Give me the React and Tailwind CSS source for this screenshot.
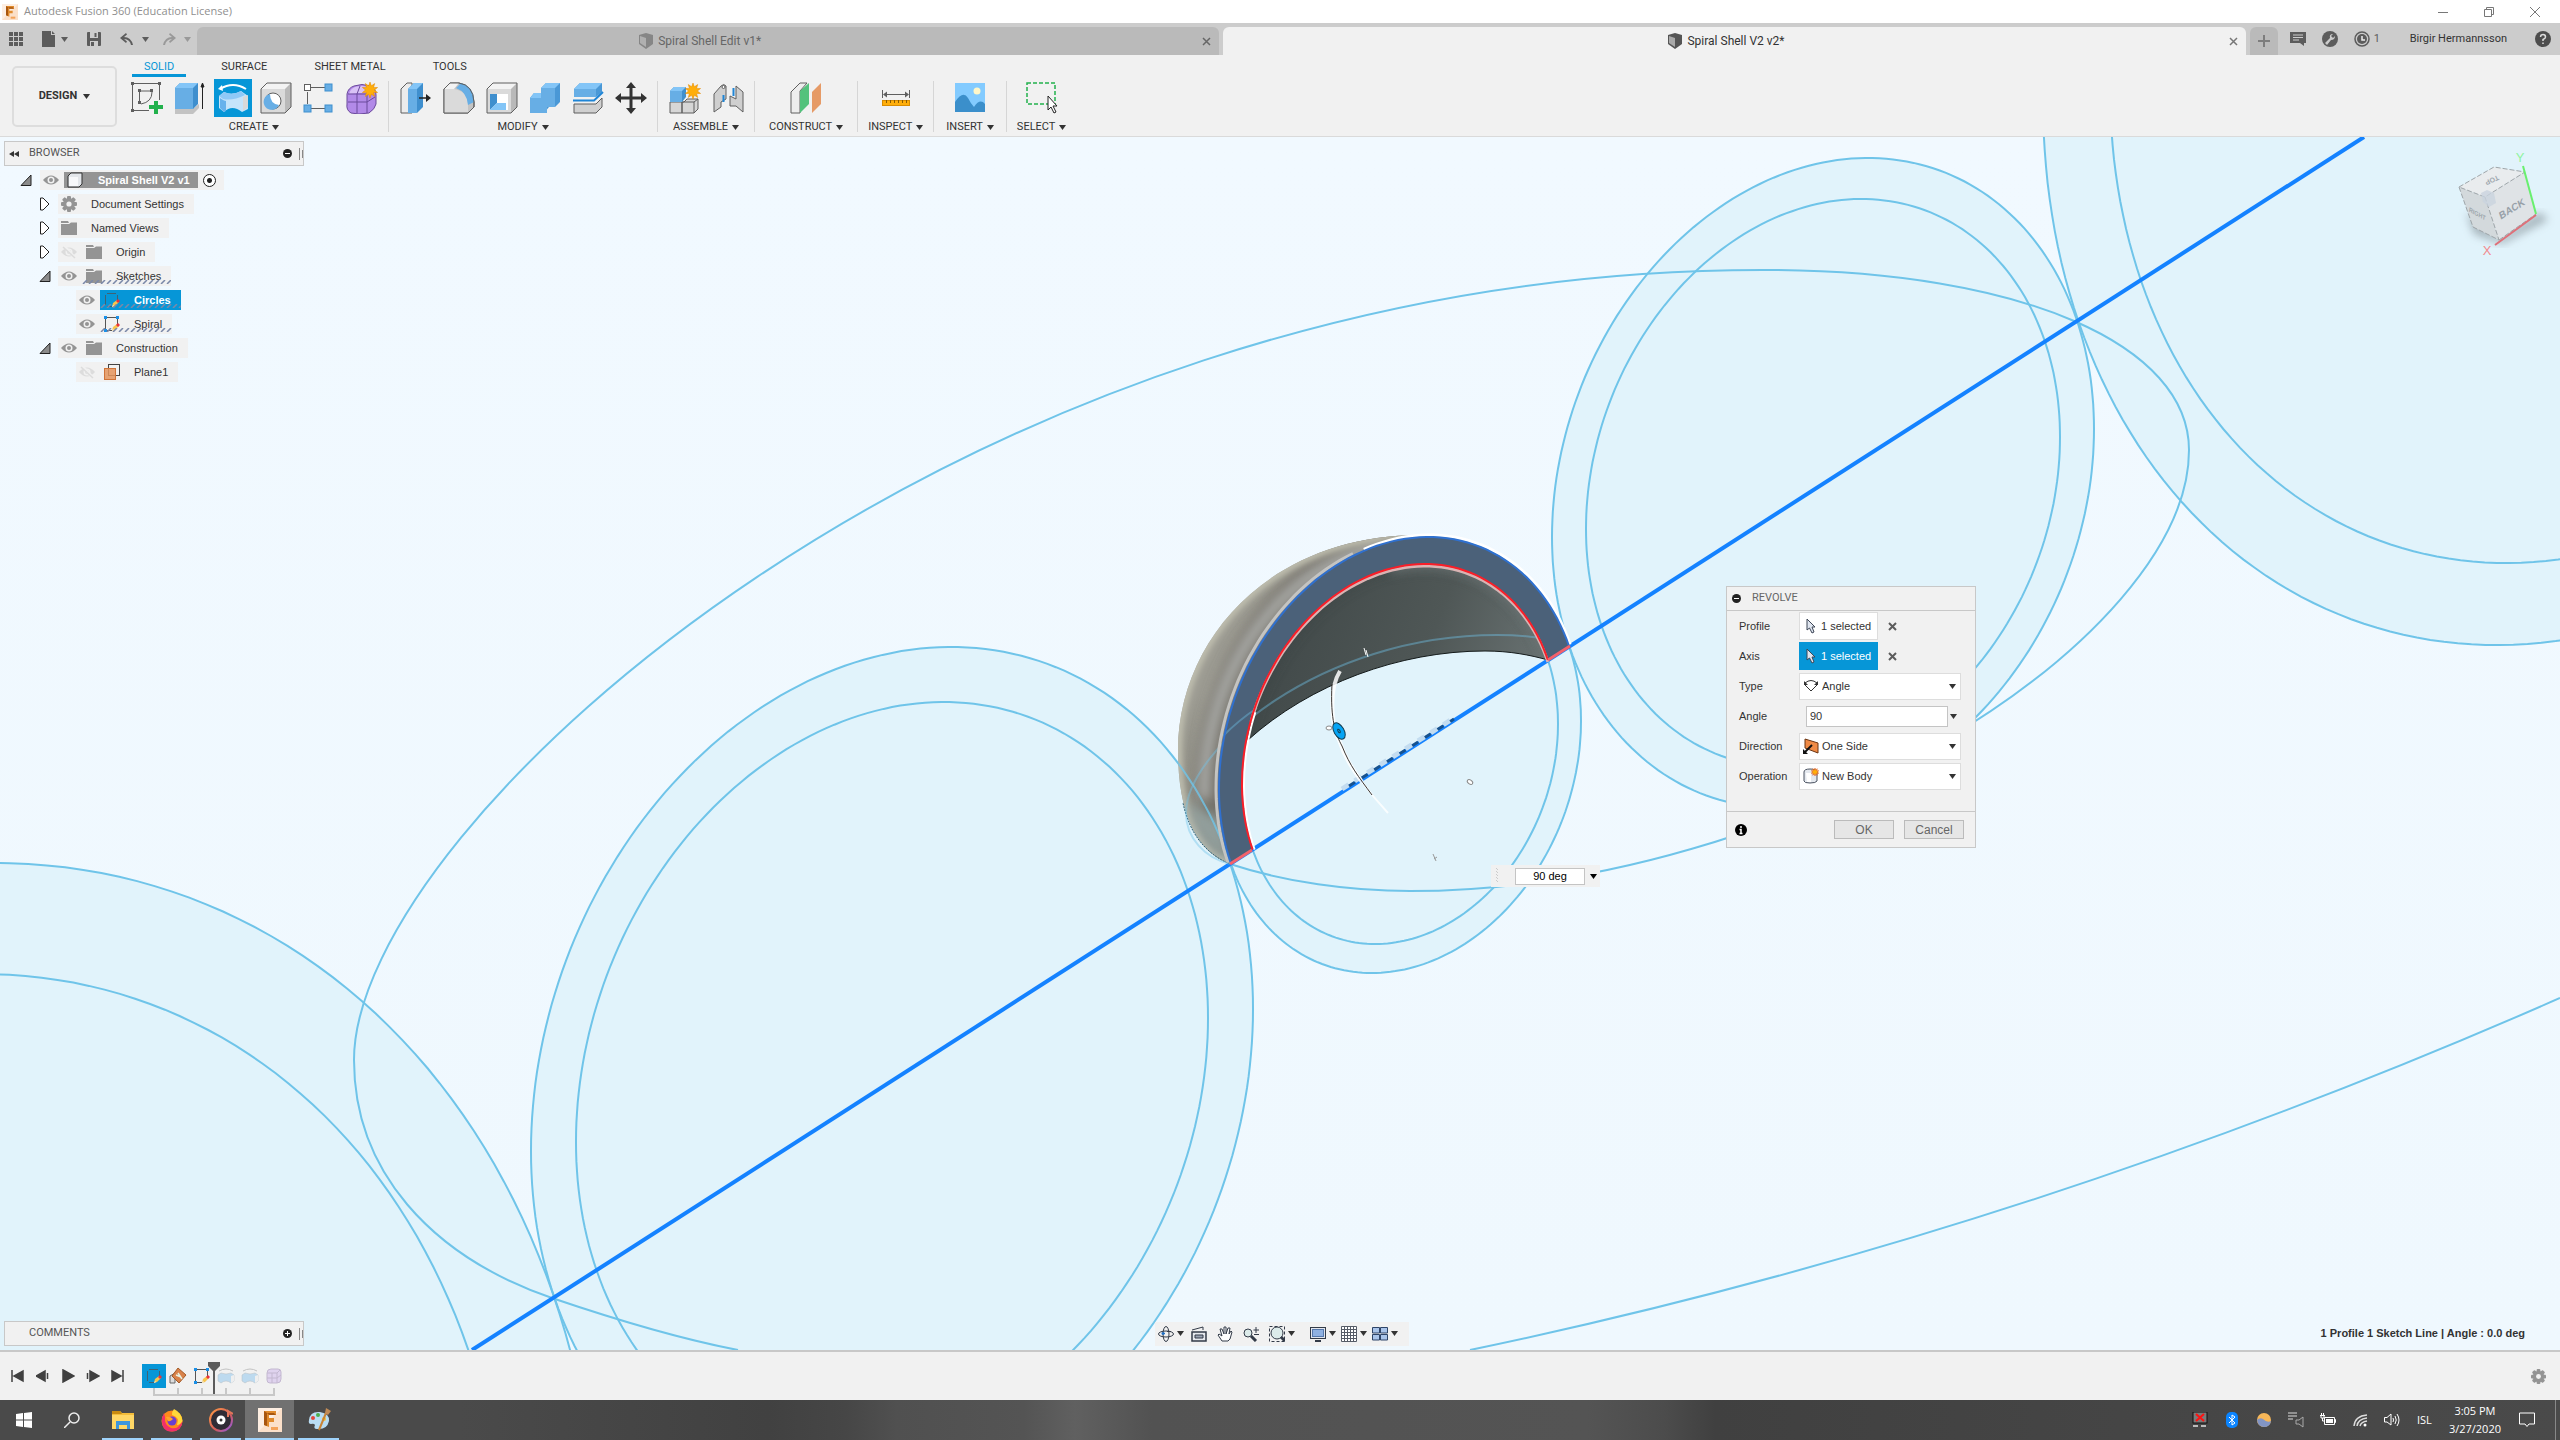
import React from "react";

/* ---------- geometry helpers ---------- */

// A circle seen in perspective: half width, half height and the vertical
// offset of its rightmost point.
const CIRCLES = {
  coreOuter: { cx: 1400, cy: 755, w: 181, h: 218, s: -34 },
  coreInner: { cx: 1400, cy: 754, w: 158, h: 190, s: -30 },
  lowOuter: { cx: 892, cy: 1080, w: 361, h: 433, s: -71 },
  lowInner: { cx: 892, cy: 1080, w: 316, h: 378, s: -62 },
  highOuter: { cx: 1823, cy: 483, w: 271, h: 325, s: -54 },
  highInner: { cx: 1823, cy: 483, w: 237, h: 284, s: -46 },
  farOuter: { cx: 2584, cy: -5, w: 541, h: 650, s: -105 },
  farInner: { cx: 2583, cy: -5, w: 473, h: 568, s: -92 },
  nearOuter: { cx: -122, cy: 1732, w: 723, h: 869, s: -140 },
  nearInner: { cx: -122, cy: 1732, w: 632, h: 758, s: -123 },
};

const depth = (c) => Math.sqrt(c.h * c.h - c.s * c.s);
const at = (c, t) => [c.cx + c.w * Math.cos(t), c.cy + c.s * Math.cos(t) + depth(c) * Math.sin(t)];
const angleOf = (c, [x, y]) => {
  const u = (x - c.cx) / c.w;
  return Math.atan2((y - c.cy - c.s * u) / depth(c), u);
};

function arcPoints(c, from, to) {
  let a = angleOf(c, from);
  let b = angleOf(c, to);
  if (b < a) b += Math.PI * 2;
  const pts = [];
  for (let i = 0; i <= 80; i++) pts.push(at(c, a + ((b - a) * i) / 80));
  return pts;
}

const fmt = (pts) => pts.map(([x, y]) => `${x.toFixed(1)} ${y.toFixed(1)}`).join(" L");

function ring(c) {
  const pts = [];
  for (let i = 0; i < 240; i++) pts.push(at(c, (i / 240) * Math.PI * 2));
  return `M${fmt(pts)}Z`;
}

const SPIRAL_START = "M1570 646C1550 638 1525 635 1497 635C1320 635 1186 750 1186 813C1186 838 1205 858 1230 864";
const SPIRAL_MID =
  "M1230 864C1285 882 1350 891 1410 891C1790 891 2189 640 2189 450C2189 346 2025 270 1762 270C960 270 354 825 354 1060C354 1170 430 1256 552 1298C605 1316 670 1337 738 1350";
const SPIRAL_END = "M1470 1350Q2021 1235 2560 998";
const SILHOUETTE = "M1230 864C1200 852 1178 820 1178 750C1178 640 1270 532 1427 535";
const MOUTH = "M1248 740C1310 684 1400 651 1485 651C1510 651 1530 655 1548 660";

const AXIS_A = [1230, 864];
const AXIS_B = [1570, 646];
const IN_A = [1252, 850];
const IN_B = [1548, 660];

function Scene() {
  const outerArc = arcPoints(CIRCLES.coreOuter, AXIS_A, AXIS_B);
  const innerArc = arcPoints(CIRCLES.coreInner, IN_A, IN_B);
  const innerTop = arcPoints(CIRCLES.coreInner, [1248, 740], IN_B);
  const band = `M${fmt(outerArc)} L${fmt([...innerArc].reverse())}Z`;
  const shell = `${SILHOUETTE} L${fmt(outerArc.slice(0, 44).reverse())}Z`;
  const cavity = `M${fmt([...innerTop].reverse())} ${MOUTH.replace("M", "L")}Z`;
  const shift = (dx, dy) => `M${fmt(outerArc.slice(0, 52).map(([x, y]) => [x + dx, y + dy]))}`;
  return (
    <svg className="absolute inset-0 h-full w-full" viewBox="0 137 2560 1213" preserveAspectRatio="xMidYMid slice" aria-hidden="true">
      <defs>
        <clipPath id="shellClip"><path d={shell} /></clipPath>
        <clipPath id="cavityClip"><path d={cavity} /></clipPath>
        <linearGradient id="bg" x1="0" y1="0" x2="0" y2="1">
          <stop offset="0" stopColor="#f1f9ff" /><stop offset="1" stopColor="#eff8fe" />
        </linearGradient>
        <linearGradient id="cavity" gradientUnits="userSpaceOnUse" x1="1290" y1="600" x2="1540" y2="690">
          <stop offset="0" stopColor="#424a4a" /><stop offset="0.55" stopColor="#4f5756" /><stop offset="1" stopColor="#6a7373" />
        </linearGradient>
        <linearGradient id="shell" gradientUnits="userSpaceOnUse" x1="1180" y1="700" x2="1240" y2="880">
          <stop offset="0" stopColor="#9c9b92" /><stop offset="0.6" stopColor="#8b8a81" /><stop offset="1" stopColor="#94a3a3" />
        </linearGradient>
        <filter id="soft" x="-30%" y="-30%" width="160%" height="160%"><feGaussianBlur stdDeviation="6" /></filter>
        <filter id="softer" x="-30%" y="-30%" width="160%" height="160%"><feGaussianBlur stdDeviation="3" /></filter>
      </defs>
      <rect x="0" y="137" width="2560" height="1213" fill="url(#bg)" />
      {["coreOuter", "lowOuter", "highOuter", "farOuter", "nearOuter"].map((k) => <path key={k} d={ring(CIRCLES[k])} fill="#e1f3fb" />)}
      <g fill="none" stroke="#6fc4e9" strokeWidth="2">
        {Object.keys(CIRCLES).map((k) => <path key={k} d={ring(CIRCLES[k])} />)}
        <path d={SPIRAL_MID} />
        <path d={SPIRAL_END} />
      </g>
      <path d="M472 1350L2364 137" stroke="#1482ff" strokeWidth="4" />

      {/* revolved body */}
      <path d={shell} fill="url(#shell)" />
      <g clipPath="url(#shellClip)" fill="none">
        <path d={shift(-10, -3)} stroke="#68645b" strokeWidth="24" filter="url(#soft)" opacity="0.75" />
        <path d="M1205 800C1200 700 1260 570 1385 545" stroke="#b4b6b4" strokeWidth="10" filter="url(#soft)" />
        <path d={SILHOUETTE} stroke="#c3c2b2" strokeWidth="8" filter="url(#softer)" />
        <path d="M1186 800Q1195 850 1232 864L1222 820Z" fill="#9aaaa9" filter="url(#soft)" opacity="0.8" />
      </g>
      <path d="M1230 864C1208 855 1190 836 1183 803" fill="none" stroke="#2b5f74" strokeWidth="1" strokeDasharray="2 1" />
      <path d={cavity} fill="url(#cavity)" />
      <g clipPath="url(#cavityClip)" fill="none">
        <path d={`M${fmt(innerTop)}`} stroke="#39413f" strokeWidth="6" filter="url(#soft)" opacity="0.6" />
        <path d={`M${fmt(innerTop.slice(40))}`} stroke="#7d8585" strokeWidth="10" filter="url(#soft)" opacity="0.7" />
      </g>
      <path d={MOUTH} fill="none" stroke="#141a1a" strokeWidth="1" />
      <g fill="none" stroke="#6fc4e9" strokeWidth="2">
        <path d={SPIRAL_START} opacity="0.42" />
        <g clipPath="url(#shellClip)"><path d={ring(CIRCLES.lowOuter)} opacity="0.8" /></g>
      </g>
      <path d={band} fill="#4b6179" />
      <path d="M1257 708C1245 716 1233 726 1223 736" fill="none" stroke="#6fc4e9" strokeWidth="2" opacity="0.4" />
      <path d={`M${fmt(outerArc.slice(0, 44).map(([x, y]) => [x - 3, y - 1]))}`} fill="none" stroke="#c4c4c2" strokeWidth="3" />
      <path d={`M${fmt(outerArc.slice(44).map(([x, y]) => [x + 1, y - 2]))}`} fill="none" stroke="#ffffff" strokeWidth="3" />
      <path d={`M${fmt(outerArc)}`} fill="none" stroke="#2f70cf" strokeWidth="2" />
      <path d={`M${fmt(innerArc.slice(18).map(([x, y]) => [x, y + 2]))}`} fill="none" stroke="#d9b3b3" strokeWidth="3" />
      <path d={`M${fmt(innerArc.slice(0, 20).map(([x, y]) => [x + 2, y]))}`} fill="none" stroke="#ffffff" strokeWidth="2" />
      <path d={`M${fmt(innerArc)}`} fill="none" stroke="#fa1e28" strokeWidth="2" />
      <path d="M1230 864L1252 850M1548 660L1570 646" stroke="#f4616b" strokeWidth="3" />

      {/* rotation handle */}
      <path d="M1342 789L1454 718" stroke="#c3dcf0" strokeWidth="5" strokeDasharray="8 7" />
      <path d="M1349 786L1454 719" stroke="#17528f" strokeWidth="3" strokeDasharray="7 8" />
      <path d="M1340 671C1328 690 1332 728 1339 740C1345 758 1352 768 1362 782" fill="none" stroke="#ffffff" strokeWidth="4" opacity="0.85" />
      <path d="M1362 782Q1374 798 1388 813" fill="none" stroke="#ffffff" strokeWidth="2" opacity="0.8" />
      <path d="M1332 684C1330 720 1336 735 1342 746C1350 766 1358 776 1372 795" fill="none" stroke="#3b3532" strokeWidth="1" />
      <ellipse cx="1339" cy="731" rx="5" ry="9" transform="rotate(-30 1339 731)" fill="#06a4f4" stroke="#123c50" strokeWidth="1" />
      <ellipse cx="1339" cy="731" rx="1" ry="2" transform="rotate(-30 1339 731)" fill="none" stroke="#123c50" />
      <ellipse cx="1329" cy="728" rx="3" ry="2" fill="#ffffff" stroke="#8a8a8a" strokeWidth="1" />
      <path d="M1364 648L1366 655M1366 650L1368 657" stroke="#ffffff" strokeWidth="1" />
      <ellipse cx="1470" cy="782" rx="3" ry="2" transform="rotate(35 1470 782)" fill="#ffffff" stroke="#8a8a8a" strokeWidth="1" />
      <path d="M1433 854L1436 861M1434 859L1437 857" stroke="#9a9a9a" strokeWidth="1" />
    </svg>
  );
}

function ViewCube() {
  return (
    <svg className="absolute top-2 right-0 h-[116px] w-[120px]" viewBox="2440 145 120 116" role="img" aria-label="View cube, back">
      <defs>
        <filter id="cubeShadow"><feGaussianBlur stdDeviation="4" /></filter>
      </defs>
      <path d="M2466 212L2500 238L2540 212L2548 220L2502 244L2474 234Z" fill="#8d9aa0" filter="url(#cubeShadow)" opacity="0.7" />
      <path d="M2459 187L2494 167L2525 172L2485 197Z" fill="#e9ecee" />
      <path d="M2459 187L2485 197L2499 240L2473 227Z" fill="#d3d9dc" />
      <path d="M2485 197L2525 172L2536 214L2499 240Z" fill="#dfe3e6" />
      <path d="M2459 187L2494 167L2525 172L2485 197ZM2459 187L2473 227L2499 240L2485 197M2499 240L2536 214" fill="none" stroke="#9ea5a9" strokeDasharray="5 2" />
      <path d="M2481 193L2487 190L2494 193L2496 203L2489 207L2483 202Z" fill="#c9d3de" opacity="0.8" />
      <g fontFamily="Liberation Sans, sans-serif" fontWeight="700" textAnchor="middle">
        <text transform="translate(2513 212) rotate(-32) skewX(-12)" fontSize="10" fill="#97a0a8">BACK</text>
        <text transform="translate(2477 216) rotate(28) skewX(20)" fontSize="6" fill="#a0a8ae">RIGHT</text>
        <text transform="translate(2491 178) rotate(155)" fontSize="7" fill="#a0a8ae">TOP</text>
      </g>
      <path d="M2523 166L2536 214" stroke="#69ef6f" strokeWidth="2" />
      <path d="M2536 215L2495 245" stroke="#df7079" strokeWidth="2" />
      <g fontFamily="Liberation Sans, sans-serif" fontSize="13" textAnchor="middle">
        <text x="2520" y="162" fill="#8ff3a0">Y</text>
        <text x="2487" y="255" fill="#f28a90">X</text>
      </g>
    </svg>
  );
}

/* ---------- small shared drawings ---------- */

const Caret = ({ className = "" }) => (
  <svg className={`h-[5px] w-[7px] shrink-0 ${className}`} viewBox="0 0 7 5" aria-hidden="true"><path d="M0 0H7L3.5 5Z" fill="currentColor" /></svg>
);

const Cube = ({ light, dark }) => (
  <svg className="h-4 w-4" viewBox="0 0 16 16" aria-hidden="true">
    <path d="M8 0L15 2V11L8 16L1 11V2Z" fill={dark} /><path d="M2 3L8 5V14L2 10Z" fill={light} />
  </svg>
);

const Gear = ({ size }) => (
  <svg width={size} height={size} viewBox="0 0 16 16" aria-hidden="true">
    <g fill="#949494">
      {[0, 45, 90, 135].map((a) => <rect key={a} x="6" y="0" width="4" height="16" rx="1" transform={`rotate(${a} 8 8)`} />)}
      <circle cx="8" cy="8" r="6" />
    </g>
    <circle cx="8" cy="8" r="2.6" fill="#f1f1f1" />
  </svg>
);

/* ---------- ribbon icons (32 × 32) ---------- */

const EDGE = "#5f5f5f";
const star = (cx, cy, r) =>
  Array.from({ length: 20 }, (_, i) => {
    const a = (i / 20) * Math.PI * 2 - Math.PI / 2;
    const q = i % 2 ? r * 0.55 : r;
    return `${cx + q * Math.cos(a)},${cy + q * Math.sin(a)}`;
  }).join(" ");

const ICONS = {
  sketch: (
    <g>
      <path d="M2 1.5H29M1.5 2V29M28.5 2V18M2 28.5H18" stroke={EDGE} fill="none" />
      <path d="M9 9H20M8.5 9V21M21 10Q21 20 10 22" stroke={EDGE} fill="none" />
      {[[0, 0], [27, 0], [0, 27], [7, 7], [19, 7], [7, 19]].map(([x, y]) => <rect key={`${x}-${y}`} x={x} y={y} width="3" height="3" fill={EDGE} />)}
      <path d="M23 19H27V23H32V27H27V32H23V27H18V23H23Z" fill="#22b14c" />
    </g>
  ),
  extrude: (
    <g>
      <path d="M1 26L20 26L25 22V26L19 32H1Z" fill="#c3c3c3" />
      <path d="M1 6L6 1H24V22L19 27H1Z" fill="#3f8fce" />
      <path d="M1 6L6 1H24L19 6Z" fill="#83c5f7" /><path d="M1 6H19V27H1Z" fill="#67aee5" />
      <path d="M28.500 27V4M27 5L28.500 1L30 5Z" stroke="#222" fill="#222" />
    </g>
  ),
  revolve: (
    <g>
      <path d="M3 7Q16 -1 29 7" fill="none" stroke="#fff" strokeWidth="2" /><path d="M1 7L5 3L6 9Z" fill="#fff" />
      <path d="M2 14L7 10Q15 14 24 9L31 14V27L25 30Q15 22 7 30L2 26Z" fill="#c5e4fb" />
      <path d="M2 14L7 10Q15 14 24 9L28 13Q16 19 6 17Z" fill="#8fc9f7" />
      <path d="M3 16Q7 19 9 19V29L7 30L3 26Z" fill="#68b2ec" /><path d="M26 15L31 13V25L26 29Z" fill="#d9d9d9" />
    </g>
  ),
  hole: (
    <g>
      <path d="M1 7L7 1H31V25L25 31H1Z" fill="#b9b9b9" /><path d="M1 7H25V31H1Z" fill="#dadada" /><path d="M1 7L7 1H31L25 7Z" fill="#f3f3f3" />
      <path d="M1 7L7 1H31V25L25 31H1Z" stroke={EDGE} fill="none" />
      <circle cx="13" cy="19" r="8" fill="#fff" stroke={EDGE} />
      <path d="M10 12A8 8 0 1 0 19 23Q10 22 10 12Z" fill="#67aee5" />
    </g>
  ),
  pattern: (
    <g>
      <path d="M8 5.500H22M4.500 10V22M8 26.500H22" stroke={EDGE} />
      <rect x="1.500" y="2.500" width="6" height="6" fill="#fff" stroke={EDGE} />
      <rect x="22" y="2" width="7" height="7" fill="#67aee5" stroke="#3f8fce" /><rect x="1" y="23" width="7" height="7" fill="#67aee5" stroke="#3f8fce" /><rect x="22" y="23" width="7" height="7" fill="#67aee5" stroke="#3f8fce" />
    </g>
  ),
  form: (
    <g>
      <path d="M1 12Q2 6 8 4Q16 1 24 4Q30 6 30 13V22Q29 27 23 31Q12 33 5 31Q0 28 1 22Z" fill="#b28ae8" stroke="#6b4a9b" />
      <path d="M3 12Q4 7 9 5Q16 3 22 5L20 11Q10 11 3 12Z" fill="#d9c2f6" />
      <path d="M2 20H21L29 15M11 31V12L14 4M21 31V12L25 6M2 12H21L29 8" stroke="#6b4a9b" fill="none" />
      <polygon points={star(24, 8, 8)} fill="#ffae0a" stroke="#e08600" strokeWidth="0.500" />
    </g>
  ),
  pressPull: (
    <g>
      <path d="M1 7L7 1H12V31H1Z" fill="#ececec" stroke={EDGE} /><path d="M8 7L14 1H23V25L17 31H8Z" fill="#3f8fce" />
      <path d="M8 7L14 1H23L17 7Z" fill="#83c5f7" /><path d="M8 7H17V31H8Z" fill="#67aee5" /><path d="M19 16H28" stroke="#222" strokeWidth="1.500" /><path d="M26 12L31 16L26 20Z" fill="#222" />
    </g>
  ),
  fillet: (
    <g>
      <path d="M1 7L7 1H16Q30 3 31 20V25L25 31H1Z" fill="#c4c4c4" stroke={EDGE} /><path d="M1 7H11Q24 9 25 21V31H1Z" fill="#dadada" /><path d="M1 7L7 1H16L11 7Z" fill="#f3f3f3" />
      <path d="M13 6L18 1Q31 5 31 20L25 23Q24 10 13 6Z" fill="#67aee5" /><path d="M1 7L7 1H16Q30 3 31 20V25L25 31H1Z" fill="none" stroke={EDGE} />
    </g>
  ),
  shell: (
    <g>
      <path d="M1 7L7 1H31V25L25 31H1Z" fill="#b9b9b9" /><path d="M1 7H25V31H1Z" fill="#dadada" /><path d="M1 7L7 1H31L25 7Z" fill="#f3f3f3" />
      <path d="M1 7L7 1H31V25L25 31H1Z" stroke={EDGE} fill="none" />
      <rect x="4" y="12" width="18" height="16" fill="#fff" /><path d="M4 12H11V21L4 28Z" fill="#3f8fce" /><path d="M4 28L11 21H20V28Z" fill="#83c5f7" />
    </g>
  ),
  combine: (
    <g>
      <path d="M12 6L17 1H31V20L26 25H20L15 31H1V16L5 11H12Z" fill="#4a98d6" /><path d="M12 6H26V25H18V31H1V16H12Z" fill="#67aee5" />
      <path d="M12 6L17 1H31L26 6ZM1 16L5 11H12V16Z" fill="#83c5f7" />
    </g>
  ),
  split: (
    <g>
      <path d="M2 7L8 1H30V10L24 15H2Z" fill="#4a98d6" /><path d="M2 7H24V15H2Z" fill="#67aee5" /><path d="M2 7L8 1H30L24 7Z" fill="#83c5f7" />
      <path d="M1 18.500H22L31 10" stroke="#1f85d6" strokeWidth="2" fill="none" />
      <path d="M2 22H24L30 16V25L24 31H2Z" fill="#d0d0d0" stroke={EDGE} />
    </g>
  ),
  move: <path d="M16 0L21 6H17.500V14.500H26V11L32 16L26 21V17.500H17.500V26H21L16 32L11 26H14.500V17.500H6V21L0 16L6 11V14.500H14.500V6H11Z" fill="#333" />,
  component: (
    <g>
      <path d="M1 20H13V31H1ZM15 20L18 17H29V27L25 31H13V20Z" fill="#d6d6d6" stroke={EDGE} /><path d="M13 20H25V31M25 20L29 17" stroke={EDGE} fill="none" />
      <path d="M1 9L5 5H17V15L13 20H1Z" fill="#3f8fce" /><path d="M1 9H13V20H1Z" fill="#67aee5" /><path d="M1 9L5 5H17L13 9Z" fill="#83c5f7" />
      <polygon points={star(24, 9, 8)} fill="#ffae0a" stroke="#e08600" strokeWidth="0.500" />
    </g>
  ),
  joint: (
    <g>
      <path d="M2 12L9 4Q12 1 14 4V17L9 20V25L2 30Z" fill="#cfcfcf" stroke={EDGE} /><circle cx="11.500" cy="5" r="1.500" fill="#fff" stroke={EDGE} />
      <path d="M24 4L31 10V30L24 24H18V14L24 17Z" fill="#cfcfcf" stroke={EDGE} /><path d="M11.500 13V20M21.500 6V14" stroke="#1f85d6" strokeWidth="2" />
    </g>
  ),
  construct: (
    <g>
      <path d="M1 10L10 1H17L10 9V31H1Z" fill="#ededed" stroke={EDGE} /><path d="M10 9L19 1V22L10 31Z" fill="#53c27c" /><path d="M22 10L31 1V22L22 31Z" fill="#e69a66" />
    </g>
  ),
  inspect: (
    <g>
      <path d="M2.500 8V16M29.500 8V16M4 12.500H28" stroke={EDGE} /><path d="M3 12.500L7 9.500V15.500ZM29 12.500L25 9.500V15.500Z" fill={EDGE} />
      <rect x="2.500" y="18.500" width="27" height="5" fill="#ffae0a" stroke="#d98c00" /><path d="M6.500 18V21M10.500 18V21M14.500 18V21M18.500 18V21M22.500 18V21M26.500 18V21" stroke="#8a5a00" />
    </g>
  ),
  insert: (
    <g>
      <rect x="1" y="1" width="30" height="29" fill="#83cbff" /><circle cx="23" cy="9" r="3.500" fill="#fff7c9" />
      <path d="M1 20Q9 8 14 16Q17 22 20 25Q26 16 31 22V30H1Z" fill="#3b8fcb" />
    </g>
  ),
  select: (
    <g>
      <rect x="1" y="1" width="28" height="21" fill="none" stroke="#22b14c" strokeWidth="1.500" strokeDasharray="4 2" />
      <path d="M22 14V28L25 25L28 31L30 30L27 24H31Z" fill="#fff" stroke="#222" />
    </g>
  ),
};

function ToolButton({ name, active }) {
  return (
    <button type="button" aria-label={name} aria-pressed={!!active} className="flex h-[38px] w-[43px] items-center justify-center">
      <span className={active ? "flex h-[38px] w-[38px] items-center justify-center bg-[#0696d7]" : "flex"}>
        <svg className="h-8 w-8" viewBox="0 0 32 32" aria-hidden="true">{ICONS[name]}</svg>
      </span>
    </button>
  );
}

const GROUPS = [
  { label: "CREATE", tools: ["sketch", "extrude", "revolve", "hole", "pattern", "form"], cls: "px-[5px]" },
  { label: "MODIFY", tools: ["pressPull", "fillet", "shell", "combine", "split", "move"], cls: "px-[5px]" },
  { label: "ASSEMBLE", tools: ["component", "joint"], cls: "px-[5px]" },
  { label: "CONSTRUCT", tools: ["construct"], cls: "px-3.5" },
  { label: "INSPECT", tools: ["inspect"], cls: "px-2.5" },
  { label: "INSERT", tools: ["insert"], cls: "px-3" },
  { label: "SELECT", tools: ["select"], cls: "px-2.5" },
];

function TitleBar() {
  return (
    <header className="flex h-[23px] items-center justify-between bg-white pr-0.5 pl-0.5">
      <div className="flex items-center gap-1.5">
        <FusionLogo className="h-4 w-4" />
        <h1 className="font-['Open_Sans',sans-serif] text-[11px] text-[#8f8f8f]">Autodesk Fusion 360 (Education License)</h1>
      </div>
      <div className="flex text-[#777]">
        <button type="button" aria-label="Minimize" className="flex h-[23px] w-[46px] items-center justify-center"><svg className="h-2.5 w-2.5" viewBox="0 0 10 10"><path d="M0 5.500H10" stroke="currentColor" /></svg></button>
        <button type="button" aria-label="Restore" className="flex h-[23px] w-[46px] items-center justify-center"><svg className="h-2.5 w-2.5" viewBox="0 0 10 10"><path d="M.5 2.500H7.500V9.500H.5ZM2.500 2.500V.5H9.500V7.500H7.500" fill="none" stroke="currentColor" /></svg></button>
        <button type="button" aria-label="Close" className="flex h-[23px] w-[46px] items-center justify-center"><svg className="h-2.5 w-2.5" viewBox="0 0 10 10"><path d="M0 0L10 10M10 0L0 10" stroke="currentColor" /></svg></button>
      </div>
    </header>
  );
}

function FusionLogo({ className }) {
  return (
    <svg className={className} viewBox="0 0 24 24" aria-hidden="true">
      <rect width="24" height="24" fill="#fbe0ca" /><path d="M0 0H24L0 24Z" fill="#fdeee2" />
      <path d="M6 3H18V7H11V10H16V14H11V19L6 17Z" fill="#e08a2c" /><path d="M6 3L9 5V18L6 17ZM11 7H18L16 5H9Z" fill="#a8560f" /><rect x="13" y="19" width="7" height="3" fill="#f4a259" />
    </svg>
  );
}

function DocumentTabs() {
  return (
    <nav aria-label="Documents" className="flex h-8 bg-[#ccc] pr-[9px] font-[Roboto,sans-serif] text-[#5c5c5c]">
      <div className="flex w-[197px] items-center pl-[9px]">
        <button type="button" aria-label="Data panel" className="w-[33px]">
          <svg className="h-3.5 w-3.5" viewBox="0 0 14 14"><path d="M0 0H4V4H0ZM5 0H9V4H5ZM10 0H14V4H10ZM0 5H4V9H0ZM5 5H9V9H5ZM10 5H14V9H10ZM0 10H4V14H0ZM5 10H9V14H5ZM10 10H14V14H10Z" fill="#5c5c5c" /></svg>
        </button>
        <button type="button" aria-label="File" className="flex w-[45px] items-center gap-1.5">
          <svg className="h-4 w-[13px]" viewBox="0 0 13 16"><path d="M0 0H9V4H13V16H0ZM10 0L13 3H10Z" fill="#5c5c5c" /></svg><Caret />
        </button>
        <button type="button" aria-label="Save" className="w-[33px]">
          <svg className="h-3.5 w-3.5" viewBox="0 0 14 14"><path d="M0 1Q0 0 1 0H13Q14 0 14 1V13Q14 14 13 14H1Q0 14 0 13Z" fill="#5c5c5c" /><path d="M3 0H11V6H3ZM3 9H11V14H3Z" fill="#ccc" /><path d="M7.500 1H9.500V5H7.500ZM4 10H7V14H4Z" fill="#5c5c5c" /></svg>
        </button>
        <button type="button" aria-label="Undo" className="flex w-[42px] items-center gap-2">
          <svg className="h-3 w-3.5" viewBox="0 0 14 12"><path d="M6 0L7 1.500L4 4Q11 4 13 12H11Q10 6.500 4 6L7 8.500L6 10L0 5Z" fill="#5c5c5c" /></svg><Caret />
        </button>
        <button type="button" aria-label="Redo" className="flex items-center gap-2 text-[#999]">
          <svg className="h-3 w-3.5" viewBox="0 0 14 12"><path d="M8 0L7 1.500L10 4Q3 4 1 12H3Q4 6.500 10 6L7 8.500L8 10L14 5Z" fill="#999" /></svg><Caret />
        </button>
      </div>
      <div className="mt-1 mr-1 flex flex-1 items-center rounded-t-md bg-[#bababa] text-[#666]">
        <span className="flex flex-1 items-center justify-center gap-1 text-xs"><Cube light="#b0b0b0" dark="#868686" />Spiral Shell Edit v1*</span>
        <button type="button" aria-label="Close Spiral Shell Edit v1" className="mr-2"><CloseX /></button>
      </div>
      <div className="mt-1 mr-1 flex flex-1 items-center rounded-t-md bg-[#f1f1f1] text-[#333]">
        <span className="flex flex-1 items-center justify-center gap-1 text-xs"><Cube light="#a9a9a9" dark="#555" />Spiral Shell V2 v2*</span>
        <button type="button" aria-label="Close Spiral Shell V2 v2" className="mr-2 text-[#777]"><CloseX /></button>
      </div>
      <button type="button" aria-label="New document" className="mt-1 mr-3 flex w-7 items-center justify-center rounded-t-md bg-[#bababa]">
        <svg className="h-3 w-3" viewBox="0 0 12 12"><path d="M6 0V12M0 6H12" stroke="#7d7d7d" strokeWidth="2" /></svg>
      </button>
      <div className="flex items-center text-[11px]">
        <button type="button" aria-label="Notifications" className="w-8"><svg className="h-3.5 w-4" viewBox="0 0 16 14"><path d="M0 0H16V11H14V14L10 11H0Z" fill="#5c5c5c" /><path d="M3 3H13M3 5.500H13M3 8H9" stroke="#ccc" /></svg></button>
        <button type="button" aria-label="Extensions" className="w-8"><svg className="h-4 w-4" viewBox="0 0 16 16"><circle cx="8" cy="8" r="8" fill="#5c5c5c" /><path d="M3 12L8 7Q7 3 11 3L9 5L11 7L13 5Q13 9 9 9L5 14Z" fill="#ccc" /></svg></button>
        <button type="button" aria-label="Job status" className="flex w-12 items-center gap-1"><svg className="h-4 w-4" viewBox="0 0 16 16"><circle cx="8" cy="8" r="7" fill="none" stroke="#5c5c5c" strokeWidth="1.500" /><circle cx="8" cy="8" r="5" fill="#5c5c5c" /><path d="M8 5V9H11" fill="none" stroke="#eee" strokeWidth="1.500" /></svg>1</button>
        <button type="button" className="ml-2 text-[#333]">Birgir Hermannsson</button>
        <button type="button" aria-label="Help" className="ml-7"><svg className="h-4 w-4" viewBox="0 0 16 16"><circle cx="8" cy="8" r="8" fill="#4d4d4d" /><path d="M5.500 6Q5.500 3.500 8 3.500T10.500 6Q10.500 7.500 8 8.500V10M8 11.500V13" fill="none" stroke="#ddd" strokeWidth="1.500" /></svg></button>
      </div>
    </nav>
  );
}

const CloseX = () => <svg className="h-[9px] w-[9px]" viewBox="0 0 9 9"><path d="M1 1L8 8M8 1L1 8" stroke="currentColor" strokeWidth="1.500" /></svg>;

function Ribbon() {
  return (
    <div className="flex border-b border-[#dadada] bg-[#f1f1f1] font-[Roboto,sans-serif] text-[11px] text-[#333]">
      <div className="w-[120px] pt-[11px] pl-3">
        <button type="button" className="flex h-[61px] w-[105px] items-center justify-center gap-1.5 rounded-[5px] border-2 border-[#ddd] font-bold">DESIGN <Caret /></button>
      </div>
      <div>
        <div role="tablist" className="flex h-[22px] gap-[23px] pl-3">
          {["SOLID", "SURFACE", "SHEET METAL", "TOOLS"].map((t, i) => (
            <button key={t} type="button" role="tab" aria-selected={i === 0} className={i === 0 ? "border-b-[3px] border-[#0696d7] px-3 pt-1 text-[#0696d7]" : "border-b-[3px] border-transparent px-3 pt-1"}>{t}</button>
          ))}
        </div>
        <div className="flex pt-0.5">
          {GROUPS.map((g, i) => (
            <section key={g.label} className="flex">
              <div className={`flex flex-col items-center ${g.cls}`}>
                <div className="flex">{g.tools.map((t) => <ToolButton key={t} name={t} active={t === "revolve"} />)}</div>
                <button type="button" className="flex h-[19px] items-center gap-1 pt-0.5">{g.label}<Caret /></button>
              </div>
              {i < GROUPS.length - 1 && <span className="mt-0.5 mb-1 w-px bg-[#d6d6d6]" />}
            </section>
          ))}
        </div>
      </div>
    </div>
  );
}

/* ---------- browser tree ---------- */

const Eye = ({ off }) => (
  <svg className="h-4 w-4 shrink-0" viewBox="0 0 16 16" aria-hidden="true">
    <path d="M0 8Q8 -1 16 8Q8 17 0 8Z" fill={off ? "#dcdcdc" : "#949494"} /><circle cx="8" cy="8" r="3.500" fill="#f1f1f1" /><circle cx="8" cy="8" r="2" fill={off ? "#dcdcdc" : "#949494"} />
    {off && <path d="M2 1L15 15" stroke="#f1f1f1" strokeWidth="3" />}
    {off && <path d="M2 3L14 14" stroke="#dcdcdc" strokeWidth="1.500" />}
  </svg>
);
const Folder = () => <svg className="h-4 w-4 shrink-0" viewBox="0 0 16 16" aria-hidden="true"><path d="M0 1H7L8 3H0ZM0 4H8L10 2.500H16V15H0Z" fill="#949494" /></svg>;
const SketchIcon = ({ selected }) => (
  <svg className="h-4 w-4 shrink-0" viewBox="0 0 16 16" aria-hidden="true">
    <path d="M3 1.500H12M1.500 3V13M13.500 3V8M3 14.500H8" stroke={selected ? "#3f6274" : "#555"} fill="none" />
    {!selected && <path d="M0 0H3V3H0ZM12 0H15V3H12ZM0 13H3V16H0Z" fill="#1a90e8" />}
    <path d="M8 15L9 11L13 8L15 10L11 14Z" fill="#f9c44c" /><path d="M12 9L14 7L16 9L14 11Z" fill="#e8323c" /><path d="M8 15L9 13L10 14Z" fill="#eee" />
  </svg>
);
const PlaneIcon = () => <svg className="h-4 w-4 shrink-0" viewBox="0 0 16 16" aria-hidden="true"><rect x="4.500" y=".5" width="11" height="11" fill="#f1f1f1" stroke="#444" /><rect x=".5" y="4.500" width="11" height="11" fill="#e4945c" fillOpacity=".85" stroke="#cf7338" /></svg>;
const BodyIcon = () => <svg className="h-4 w-4 shrink-0" viewBox="0 0 16 16" aria-hidden="true"><path d="M1 4L4 1H15V12L12 15H1Z" fill="#e3e6ea" stroke="#333" /><path d="M2 5H11V14H2Z" fill="#f7f8fa" /></svg>;

const Arrow = ({ open }) => (
  <svg className="h-3.5 w-3 shrink-0" viewBox="0 0 12 14" aria-hidden="true">
    {open ? <path d="M11 2V12.500H1Z" fill="#8b8b8b" stroke="#222" /> : <path d="M1.500 1H4L10 7L4 13H1.500Z" fill="#fff" stroke="#222" />}
  </svg>
);

const Hatch = () => (
  <svg className="absolute bottom-0.5 left-0 h-1 w-full" aria-hidden="true">
    <defs><pattern id="hatch" width="6" height="4" patternUnits="userSpaceOnUse"><path d="M1 4L5 0" stroke="#7a88a8" strokeWidth="1.500" /></pattern></defs>
    <rect width="100%" height="4" fill="url(#hatch)" />
  </svg>
);

const TREE = [
  { arrow: "closed", icon: <Gear size={16} />, text: "Document Settings" },
  { arrow: "closed", icon: <Folder />, text: "Named Views" },
  { arrow: "closed", eye: "off", icon: <Folder />, text: "Origin" },
  { arrow: "open", eye: "on", icon: <Folder />, text: "Sketches", hatch: true },
  { eye: "on", icon: <SketchIcon selected />, text: "Circles", hatch: true, selected: true },
  { eye: "on", icon: <SketchIcon />, text: "Spiral", hatch: true },
  { arrow: "open", eye: "on", icon: <Folder />, text: "Construction" },
  { eye: "off", icon: <PlaneIcon />, text: "Plane1" },
];

function PanelHeader({ title, collapsed }) {
  return (
    <div className="flex h-[25px] w-[300px] items-center border border-[#c8c8c8] bg-[#f1f1f1] pl-1 text-[11px] text-[#555]">
      <button type="button" aria-label={`Collapse ${title}`} className="w-5">
        {!collapsed && <svg className="h-1.5 w-2.5" viewBox="0 0 10 6"><path d="M5 0V6L0 3ZM10 0V6L5 3Z" fill="#333" /></svg>}
      </button>
      <h2 className="flex-1 font-[Roboto,sans-serif]">{title}</h2>
      <button type="button" aria-label={`${title} options`} className="mr-[7px]"><RoundSign plus={collapsed} /></button>
      <svg className="h-3 w-1" viewBox="0 0 4 12"><path d="M.5 0V12M3.500 2V10" stroke="#888" /></svg>
    </div>
  );
}
const RoundSign = ({ plus }) => <svg className="h-[9px] w-[9px]" viewBox="0 0 9 9"><circle cx="4.500" cy="4.500" r="4.500" fill="#222" /><path d={plus ? "M2 4.500H7M4.500 2V7" : "M2 4.500H7"} stroke="#fff" /></svg>;

function BrowserPanel() {
  return (
    <aside aria-label="Browser" className="text-[11px] text-[#333]">
      <PanelHeader title="BROWSER" />
      <ul className="pt-0.5">
        <li className="flex h-6 items-center gap-2 pl-4">
          <Arrow open />
          <div className="flex h-5 items-center gap-[5px] bg-[#f1f1f1] pr-2 pl-[3px]">
            <Eye />
            <span className="flex h-4 items-center gap-[15px] bg-[#949494] pr-2 pl-[3px] font-bold text-white"><BodyIcon />Spiral Shell V2 v1</span>
            <input type="radio" defaultChecked aria-label="Activate Spiral Shell V2 v1" className="h-[13px] w-[13px] appearance-none rounded-full border border-[#222] bg-[radial-gradient(circle,#222_2px,#fff_3px)]" />
          </div>
        </li>
        {TREE.map((r) => (
          <li key={r.text} className={`flex h-6 items-center ${r.arrow ? "pl-[35px]" : "pl-[72px]"}`}>
            {r.arrow && <span className="mr-[7px] flex"><Arrow open={r.arrow === "open"} /></span>}
            <div className="flex h-5 items-center bg-[#f1f1f1] pl-[3px]">
              {r.eye && <span className="mr-[5px] flex"><Eye off={r.eye === "off"} /></span>}
              <span className={`relative flex h-5 items-center gap-[14px] pr-2.5 ${r.eye ? "pl-1" : ""} ${r.selected ? "bg-[#0696d7] font-bold text-white" : ""}`}>
                {r.icon}{r.text}{r.hatch && <Hatch />}
              </span>
            </div>
          </li>
        ))}
      </ul>
    </aside>
  );
}

/* ---------- revolve dialog ---------- */

const CursorIcon = () => <svg className="h-4 w-2.5" viewBox="0 0 10 16" aria-hidden="true"><path d="M1 1V12L3.500 10L6 15L8 14L6 9H9Z" fill="#dfe5ef" stroke="#3d4657" /></svg>;

function SelectionRow({ label, active }) {
  return (
    <div className="flex h-[30px] items-center">
      <span className="w-[60px]">{label}</span>
      <button type="button" aria-label={`${label} selection`} className={active ? "flex h-7 w-[79px] items-center gap-[5px] border border-[#0696d7] bg-[#0696d7] pl-1.5 text-white" : "flex h-7 w-[79px] items-center gap-[5px] border border-[#ddd] bg-white pl-1.5"}><CursorIcon />1 selected</button>
      <button type="button" aria-label={`Clear ${label}`} className="ml-[10px] text-[#5c5c5c]"><svg className="h-[9px] w-[9px]" viewBox="0 0 9 9"><path d="M1 1L8 8M8 1L1 8" stroke="currentColor" strokeWidth="2" /></svg></button>
    </div>
  );
}

function SelectRow({ label, icon, value }) {
  return (
    <label className="flex h-[30px] items-center">
      <span className="w-[60px]">{label}</span>
      <span className="flex h-[27px] flex-1 items-center border border-[#ddd] bg-white pr-1 pl-[3px]">
        {icon}
        <select defaultValue={value} className="ml-[3px] flex-1 appearance-none bg-transparent outline-none"><option>{value}</option></select>
        <Caret className="h-1 w-1.5" />
      </span>
    </label>
  );
}

function RevolveDialog() {
  return (
    <form aria-label="Revolve" onSubmit={(e) => e.preventDefault()} className="absolute top-[449px] left-[1726px] w-[250px] border border-[#c8c8c8] bg-[#f1f1f1] text-[11px] text-[#333]">
      <div className="flex h-6 items-center gap-[11px] border-b border-[#c8c8c8] pl-[5px] text-[#666]"><RoundSign /><h2 className="font-[Roboto,sans-serif]">REVOLVE</h2></div>
      <div className="pr-3.5 pb-5 pl-3">
        <SelectionRow label="Profile" />
        <SelectionRow label="Axis" active />
        <SelectRow label="Type" value="Angle" icon={<svg className="h-4 w-4" viewBox="0 0 16 16" aria-hidden="true"><path d="M1 6L8 13L15 6M2 5Q8 0 14 5" fill="none" stroke="#333" /><path d="M1 3V7H5ZM15 3V7H11Z" fill="#333" /></svg>} />
        <label className="flex h-[30px] items-center">
          <span className="w-[67px]">Angle</span>
          <input type="text" defaultValue="90" className="h-[21px] w-[142px] border border-[#c4c4c4] bg-white pl-[3px] outline-none" />
          <Caret className="ml-0.5 h-1 w-1.5" />
        </label>
        <SelectRow label="Direction" value="One Side" icon={<svg className="h-4 w-4" viewBox="0 0 16 16" aria-hidden="true"><path d="M2 1L15 5V15L2 10Z" fill="#f08a45" stroke="#6b3512" /><path d="M1 15L9 7" stroke="#111" strokeWidth="2" /><path d="M0 16V11L5 16Z" fill="#111" /></svg>} />
        <SelectRow label="Operation" value="New Body" icon={<svg className="h-4 w-4" viewBox="0 0 16 16" aria-hidden="true"><path d="M1 4Q1 1 7 1T14 4V13Q13 15 7 15T1 13Z" fill="#e4e8ee" stroke="#4a5260" /><path d="M3 5H8V14H4Z" fill="#fff" /><polygon points={star(12, 4, 4)} fill="#ffae0a" stroke="#d84a1b" strokeWidth="0.500" /></svg>} />
      </div>
      <div className="flex h-9 items-center border-t border-[#c8c8c8] pr-[11px] pl-2">
        <button type="button" aria-label="Information"><svg className="h-3 w-3" viewBox="0 0 12 12"><circle cx="6" cy="6" r="6" fill="#000" /><path d="M6 2V4M4.500 5.500H6V9M4.500 9.500H7.500" stroke="#fff" strokeWidth="1.500" fill="none" /></svg></button>
        <button type="submit" className="ml-auto h-[19px] w-[60px] border border-[#bbb] bg-[#e6e6e6] text-xs leading-none text-[#666]">OK</button>
        <button type="button" className="ml-2.5 h-[19px] w-[60px] border border-[#bbb] bg-[#e6e6e6] text-xs leading-none text-[#666]">Cancel</button>
      </div>
    </form>
  );
}

function AngleFlyout() {
  return (
    <div className="absolute top-[728px] left-[1491px] flex h-[22px] items-center bg-[#f1f1f1] pr-[3px] pl-1">
      <svg className="mr-4 h-[18px] w-1" viewBox="0 0 4 18" aria-hidden="true"><path d="M1 1L3 3M1 4L3 6M1 7L3 9M1 10L3 12M1 13L3 15" stroke="#ccc" /></svg>
      <input type="text" aria-label="Angle" defaultValue="90 deg" className="h-[17px] w-[70px] border border-[#c4c4c4] bg-white text-center text-[11px] text-black outline-none" />
      <Caret className="ml-[5px] h-1 w-1.5" />
    </div>
  );
}

/* ---------- navigation bar ---------- */

const NAV = [
  { n: "Orbit", caret: true, w: "w-[33px]", d: <g fill="none" stroke="#333b48"><ellipse cx="8" cy="8" rx="7.500" ry="3" /><ellipse cx="8" cy="8" rx="3" ry="7.500" /><path d="M7 7.500H3.500M5 6V9" stroke="#1f6fc4" strokeWidth="1.500" /><path d="M9 5.500H13" stroke="#333b48" /></g> },
  { n: "Look at", w: "w-[26px]", d: <g stroke="#333b48"><path d="M1 6H15V15H1Z" fill="#e6e9ee" strokeWidth="1.500" /><path d="M4 9H12V12H4Z" fill="#9aa3b2" /><path d="M1 4L12 1V4" fill="none" /></g> },
  { n: "Pan", w: "w-[26px]", d: <path d="M5 15L1 9L2 8L5 10L3 3L5 3L7 8L7 1L9 1L9 8L11 2L13 2L12 8L14 5L15 6L13 13L11 15Z" fill="#fff" stroke="#333b48" /> },
  { n: "Zoom", w: "w-[26px]", d: <g stroke="#333b48"><circle cx="5" cy="7" r="4" fill="#dcebea" /><path d="M8 10L13 15" strokeWidth="3" /><path d="M13 1V7M10.500 4H16M11 8.500H16" fill="none" /></g> },
  { n: "Zoom window", caret: true, w: "w-[41px]", d: <g stroke="#333b48"><path d="M.5 .5H15.500V15.500H.5Z" fill="none" strokeDasharray="3 2" /><circle cx="8" cy="7" r="6" fill="#dcebea" /><path d="M12 11L16 15" strokeWidth="3" /></g> },
  { n: "Display settings", caret: true, w: "w-[31px]", d: <g stroke="#333b48"><rect x=".5" y="1.500" width="15" height="11" fill="#e2e6ee" /><rect x="2.500" y="3.500" width="11" height="7" fill="#8fb1e2" stroke="#5578ac" /><path d="M5 15H11" strokeWidth="2" /></g> },
  { n: "Grid and snaps", caret: true, w: "w-[31px]", d: <path d="M.5 .5H15.500V15.500H.5ZM3.500 0V16M6.500 0V16M9.500 0V16M12.500 0V16M0 3.500H16M0 6.500H16M0 9.500H16M0 12.500H16" fill="#fff" stroke="#555b66" /> },
  { n: "Viewports", caret: true, w: "w-[31px]", d: <path d="M.5 1.500H7.500V7H.5ZM8.500 1.500H15.500V7H8.500ZM.5 8.500H7.500V14H.5ZM8.500 8.500H15.500V14H8.500Z" fill="#a9c4ea" stroke="#2e4468" /> },
];

function NavBar() {
  return (
    <div role="toolbar" aria-label="Navigation" className="flex h-6 items-center bg-[#f1f1f1] pr-1.5 pl-[3px] text-[#333]">
      {NAV.map((x) => (
        <button key={x.n} type="button" aria-label={x.n} className={`flex items-center gap-[3px] ${x.w}`}>
          <svg className="h-4 w-4 shrink-0" viewBox="0 0 16 16">{x.d}</svg>{x.caret && <Caret className="h-1 w-1.5" />}
        </button>
      ))}
    </div>
  );
}

/* ---------- timeline ---------- */

const PLAY = [
  ["Start", "M1 1V13M12 2V12L3 7Z"], ["Step back", "M9 2V12L0 7ZM11.500 4V10"], ["Play", "M2 1L13 7L2 13Z"], ["Step forward", "M4 2V12L13 7ZM1.500 4V10"], ["End", "M1 2V12L10 7ZM12 1V13"],
];
const RevolveMini = () => <svg className="h-[18px] w-[18px]" viewBox="0 0 18 18"><g opacity=".45"><path d="M2 4Q9 0 16 4" stroke="#888" fill="none" /><path d="M1 8L4 6Q9 8 14 6L17 8V14L14 16Q9 12 4 16L1 14Z" fill="#7fc0ee" stroke="#6a7c8a" strokeWidth=".5" /><path d="M14 9L17 8V14L14 16Z" fill="#eee" /></g></svg>;

function Timeline() {
  const features = [
    ["Sketch Circles", <span key="a" className="flex h-6 w-6 items-center justify-center bg-[#0696d7]"><SketchIcon selected /></span>],
    ["Plane", <svg key="b" className="h-[18px] w-[18px]" viewBox="0 0 18 18"><path d="M1 9L6 6V16H1Z" fill="#ddd" stroke="#666" /><path d="M9 1L17 8L10 16L3 9Z" fill="#d9824a" stroke="#a35a26" /><path d="M7 8L12 10M9 6L13 12" stroke="#e8f2e2" strokeWidth="1.500" /></svg>],
    ["Sketch Spiral", <SketchIcon key="c" />],
    ["Revolve", <RevolveMini key="d" />],
    ["Revolve 2", <RevolveMini key="e" />],
    ["Form", <svg key="f" className="h-4 w-4" viewBox="0 0 16 16"><g opacity=".4"><path d="M1 5Q1 1 5 1H12Q15 1 15 4V11Q15 15 11 15H4Q1 15 1 12Z" fill="#c6a8ec" stroke="#80659f" /><path d="M1 5H11V15M11 5L14 2M6 5V15M1 10H11L15 7" fill="none" stroke="#80659f" /></g></svg>],
  ];
  return (
    <footer className="flex h-[50px] items-center border-t-2 border-[#c8c8c8] bg-[#f1f1f1] pr-3.5 pl-[5px]">
      <div className="flex text-[#404040]">
        {PLAY.map(([n, d]) => (
          <button key={n} type="button" aria-label={n} className="flex w-[25px] items-center justify-center"><svg className="h-3.5 w-3.5" viewBox="0 0 14 14"><path d={d} fill="currentColor" stroke="currentColor" strokeWidth="1.500" /></svg></button>
        ))}
      </div>
      <div className="relative ml-3 pt-2">
        <ol className="flex">
          {features.map(([n, icon]) => (
            <li key={n}>
              <button type="button" aria-label={n} className="flex h-6 w-6 items-center justify-center">{icon}</button>
              <span className="mx-auto block h-1.5 w-0.5 bg-[#c8c8c8]" />
            </li>
          ))}
        </ol>
        <div className="mx-[11px] h-0.5 bg-[#c8c8c8]" />
        <svg className="absolute top-1.5 left-[66px] h-8 w-3" viewBox="0 0 12 32" aria-hidden="true"><path d="M0 0H12V4L7 9V32H5V9L0 4Z" fill="#5c5c5c" /></svg>
      </div>
      <button type="button" aria-label="Timeline settings" className="ml-auto"><Gear size={15} /></button>
    </footer>
  );
}

/* ---------- taskbar ---------- */

const APPS = [
  ["File Explorer", <svg key="1" className="h-6 w-6" viewBox="0 0 24 24"><path d="M1 3H9L11 5H23V20H1Z" fill="#f4bd3a" /><path d="M1 3H9L11 6H1Z" fill="#c98b10" /><path d="M1 7H23V21H1Z" fill="#ffd766" /><path d="M5 13H19V21H16V17H8V21H5Z" fill="#3c96de" /></svg>],
  ["Firefox", <svg key="2" className="h-6 w-6" viewBox="0 0 24 24"><circle cx="12" cy="13" r="10.500" fill="#ff8a1c" /><path d="M2 10Q1 24 12 23.500Q22 23 22.500 13Q18 22 11 20Q4 17 5 9L4 5Z" fill="#f0306a" /><path d="M14 1Q22 5 22.500 13Q20 17 17 17Q20 9 12 7Q12 3 14 1Z" fill="#ffd83a" /><circle cx="12" cy="13" r="4.500" fill="#6a3fd0" /><path d="M6 9Q10 8 13 11Q10 14 8 13Z" fill="#ffa52c" /></svg>],
  ["Groove", <svg key="3" className="h-6 w-6" viewBox="0 0 24 24"><defs><linearGradient id="ringG" x1="0" y1="0" x2="1" y2="1"><stop offset="0" stopColor="#ff9a44" /><stop offset=".6" stopColor="#d15a5a" /><stop offset="1" stopColor="#8a5cf0" /></linearGradient></defs><circle cx="12" cy="12" r="11" fill="#2f2c35" stroke="url(#ringG)" strokeWidth="2" /><circle cx="12" cy="12" r="4.500" fill="#fff" /><circle cx="12" cy="12" r="1.500" fill="#333" /><path d="M19 9V3L24 6" fill="none" stroke="#e0765a" strokeWidth="2" /></svg>],
  ["Fusion 360", <FusionLogo key="4" className="h-6 w-6" />],
  ["Paint", <svg key="5" className="h-6 w-6" viewBox="0 0 24 24"><path d="M2 12Q3 3 13 4Q23 6 22 13Q20 22 10 21Q6 21 8 17Q7 15 4 16Q1 16 2 12Z" fill="#b9ddf3" /><circle cx="6" cy="10" r="2" fill="#e2453c" /><circle cx="11" cy="7" r="2" fill="#4caf50" /><circle cx="17" cy="11" r="2" fill="#f6c432" /><path d="M12 22L19 5" stroke="#c98436" strokeWidth="2" /><path d="M18 5L19 0L24 3L21 7Z" fill="#c08a55" /></svg>],
];

function Taskbar() {
  return (
    <div className="flex h-10 items-stretch bg-[linear-gradient(90deg,#4a4a4a_0%,#4a4a4a_18%,#414141_30%,#464646_33%,#505050_35%,#545454_40%,#606060_42%,#525252_45%,#545454_62%,#4c4c4c_65%,#404040_67%,#464646_86%,#4a4a4a_100%)] font-['Open_Sans',sans-serif] text-[11px] text-white">
      <button type="button" aria-label="Start" className="flex w-12 items-center justify-center"><svg className="h-4 w-4" viewBox="0 0 16 16"><path d="M0 2L7 1V7.500H0ZM8 1L16 0V7.500H8ZM0 8.500H7V15L0 14ZM8 8.500H16V16L8 15Z" fill="#fff" /></svg></button>
      <button type="button" aria-label="Search" className="flex w-12 items-center justify-center"><svg className="h-4 w-4" viewBox="0 0 16 16"><circle cx="10" cy="6" r="5" fill="none" stroke="#eee" strokeWidth="1.500" /><path d="M6 10L0 16" stroke="#eee" strokeWidth="1.500" /></svg></button>
      <div className="ml-0.5 flex">
        {APPS.map(([n, icon]) => (
          <button key={n} type="button" aria-label={n} className={n === "Fusion 360" ? "flex w-[49px] items-center justify-center border-b-2 border-[#9fd3fb] bg-[#717171] pt-0.5" : "mx-1 flex w-[41px] items-center justify-center border-b-2 border-[#9fd3fb] pt-0.5"}>{icon}</button>
        ))}
      </div>
      <div className="ml-auto flex items-center">
        <div className="flex items-center gap-4">
          <svg className="h-4 w-4" viewBox="0 0 16 16"><rect x="1" y="0" width="14" height="11" fill="#7a7a7a" stroke="#111" /><path d="M4 2L12 9M12 2L4 9" stroke="#f11" strokeWidth="2" /><path d="M1 13H6V15H1ZM9 13H14V15H9Z" fill="#bbb" /></svg>
          <svg className="h-4 w-4" viewBox="0 0 16 16"><rect x="2" y="0" width="12" height="16" rx="5" fill="#0a84ff" /><path d="M5 5L11 11L8 13V3L11 5L5 11" fill="none" stroke="#fff" /></svg>
          <svg className="h-4 w-4" viewBox="0 0 16 16"><circle cx="8" cy="8" r="7" fill="#f7b758" /><path d="M1 8Q4 5 7 7Q11 11 15 9Q14 15 8 15T1 8Z" fill="#8295c4" /></svg>
          <svg className="h-4 w-4" viewBox="0 0 16 16"><path d="M0 1H9M0 4H9M0 7H5" stroke="#aaa" strokeWidth="1.500" /><path d="M8 8H11L15 5V15L11 12H8Z" fill="none" stroke="#aaa" /></svg>
          <svg className="h-4 w-4" viewBox="0 0 16 16"><path d="M4.500 5.500H14.500V12.500H4.500ZM15 7.500H15.500V10.500H15" fill="none" stroke="#fff" /><path d="M6 7H13V11H6Z" fill="#fff" /><path d="M0 3.500H5M1.500 1V3.500M3.500 1V3.500M1 4V6H4V4M2.500 6V9H4.500" fill="none" stroke="#fff" /></svg>
          <svg className="h-4 w-4" viewBox="0 0 16 16"><path d="M2 14Q3 4 15 3M5 14Q6 7 15 6M8 14Q9 10 15 9" fill="none" stroke="#ddd" strokeWidth="1.500" /><circle cx="13" cy="13" r="1.500" fill="#fff" /></svg>
          <svg className="h-4 w-4" viewBox="0 0 16 16"><path d="M.5 5.500H3L7 2V13L3 10H.5ZM9 6Q10 8 9 10M11 4Q13.500 8 11 12M13 2Q17 8 13 14" fill="none" stroke="#fff" /></svg>
        </div>
        <span className="ml-[17px] w-5">ISL</span>
        <time dateTime="2020-03-27T15:05" className="ml-3 text-center leading-[18px]">3:05 PM<br />3/27/2020</time>
        <button type="button" aria-label="Action center" className="ml-[18px]"><svg className="h-4 w-4" viewBox="0 0 16 16"><path d="M.5 1H15.500V12H10L8 14.500L6 12H.5Z" fill="none" stroke="#fff" /></svg></button>
        <span className="mr-1 ml-5 h-10 w-px bg-[#888]" />
      </div>
    </div>
  );
}

export default function App() {
  return (
    <div className="flex min-h-screen flex-col overflow-hidden font-['Liberation_Sans',Arial,sans-serif]">
      <TitleBar />
      <DocumentTabs />
      <Ribbon />
      <main className="relative flex flex-1 flex-col justify-between overflow-hidden bg-[#f0f9ff]">
        <Scene />
        <ViewCube />
        <div className="relative pt-1 pl-1"><BrowserPanel /></div>
        <RevolveDialog />
        <AngleFlyout />
        <div className="relative grid grid-cols-[1fr_auto_1fr] items-center pb-1 pl-1">
          <PanelHeader title="COMMENTS" collapsed />
          <NavBar />
          <p className="pr-[35px] text-right text-[11px] font-bold text-[#333]">1 Profile 1 Sketch Line | Angle : 0.0 deg</p>
        </div>
      </main>
      <Timeline />
      <Taskbar />
    </div>
  );
}
